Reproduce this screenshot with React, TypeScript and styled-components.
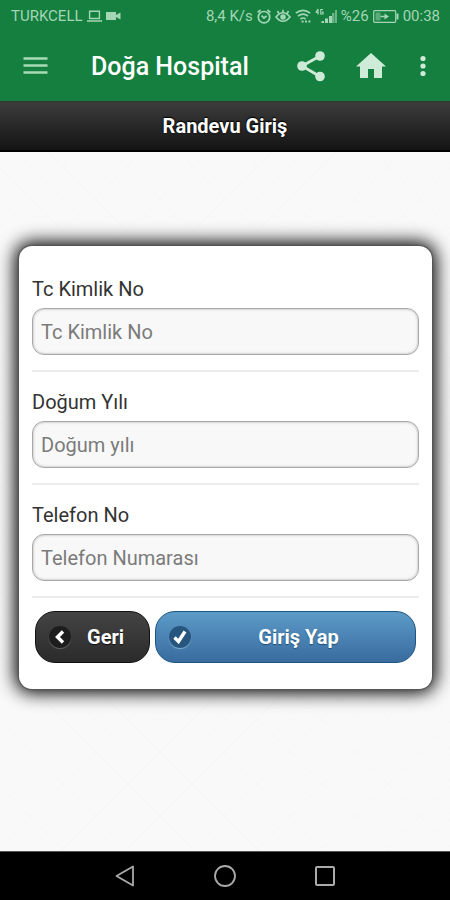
import React from "react";
import styled, { createGlobalStyle, css } from "styled-components";

const GlobalStyle = createGlobalStyle`
  *, *::before, *::after { box-sizing: border-box; }
  body { margin: 0; font-family: Roboto, "Noto Sans", sans-serif; }
  button, input { font-family: inherit; }
  svg { display: block; flex: none; }
`;

const Screen = styled.div`
  min-height: 100vh;
  display: flex;
  flex-direction: column;
  background: #f8f8f8;
`;

const StatusBar = styled.div`
  display: flex;
  justify-content: space-between;
  align-items: center;
  height: 32px;
  padding: 0 10px 0 11px;
  background: #157f40;
  color: #a3d6b4;
  font-size: 15px;
`;

const StatusGroup = styled.div`
  display: flex;
  align-items: center;
  gap: 4px;
  white-space: nowrap;
`;

const AppBar = styled.header`
  display: flex;
  align-items: center;
  height: 69px;
  padding: 0 20px 0 19px;
  background: #157f40;
  color: #fff;
`;

const AppTitle = styled.h1`
  flex: 1;
  margin: 0 0 0 39px;
  font-size: 25px;
  line-height: 32px;
  font-weight: 500;
  white-space: nowrap;
`;

const Actions = styled.div`
  display: flex;
  align-items: center;
  gap: 30px;
`;

const IconButton = styled.button<{ $color?: string }>`
  display: flex;
  padding: 0;
  border: 0;
  background: none;
  color: ${(p) => p.$color ?? "#cdebd6"};
  cursor: pointer;
`;

const PageHeader = styled.div`
  display: flex;
  align-items: center;
  justify-content: center;
  height: 51px;
  border-top: 1px solid #2c3a30;
  border-bottom: 2px solid #000;
  background: linear-gradient(#3c3c3c, #141414);
`;

const PageTitle = styled.h2`
  margin: 0;
  font-size: 20px;
  line-height: 24px;
  font-weight: 700;
  color: #fff;
  text-shadow: 0 0 2px #000, 0 -1px 1px #000;
`;

const Content = styled.main`
  flex: 1;
  padding: 94px 18px 24px 19px;
  background:
    repeating-linear-gradient(45deg, transparent 0 22px, #f7f7f7 22px 23px),
    repeating-linear-gradient(-45deg, transparent 0 22px, #f7f7f7 22px 23px),
    #f9f9f9;
`;

const Card = styled.form`
  padding: 31px 13px 26px;
  border-radius: 13px;
  background: #fff;
  box-shadow: 0 0 1px 1px #555, 0 0 18px 4px #000;
`;

const Field = styled.div`
  display: flex;
  flex-direction: column;
  gap: 7px;
  padding-bottom: 15px;
  border-bottom: 2px solid #ededed;

  & + & { padding-top: 18px; }
`;

const Label = styled.label`
  font-size: 20px;
  line-height: 24px;
  color: #333;
`;

const TextInput = styled.input`
  width: 100%;
  height: 47px;
  padding: 0 8px;
  border: 1px solid #a8a8a8;
  border-radius: 12px;
  background: #f8f8f8;
  box-shadow: inset 0 0 2px 1px #d4d4d4;
  font-size: 20px;
  color: #333;
  outline: none;

  &::placeholder { color: #7b7b7b; opacity: 1; }
`;

const ButtonRow = styled.div`
  display: flex;
  gap: 5px;
  padding: 13px 3px 0;
`;

const dark = css`
  border-color: #111;
  background: linear-gradient(#444, #2b2b2b);
  text-shadow: 0 1px 1px #111;
`;

const primary = css`
  flex: 1;
  border-color: #1b5680;
  background: linear-gradient(#5c9bc8, #396b9f);
  text-shadow: 0 1px 1px #1d4f75;
`;

const ActionButton = styled.button<{ $primary?: boolean }>`
  display: flex;
  align-items: center;
  gap: 16px;
  height: 52px;
  padding: 0 25px 0 13px;
  border: 1px solid;
  border-radius: 20px;
  color: #fff;
  font-size: 20px;
  font-weight: 700;
  cursor: pointer;
  ${(p) => (p.$primary ? primary : dark)}
`;

const ButtonText = styled.span`
  flex: 1;
  text-align: center;
`;

const IconDisc = styled.span<{ $primary?: boolean }>`
  display: flex;
  align-items: center;
  justify-content: center;
  width: 22px;
  height: 22px;
  border-radius: 50%;
  background: ${(p) => (p.$primary ? "#26557d" : "#1d1d1d")};
  box-shadow: 0 1px 1px ${(p) => (p.$primary ? "#7fb0d4" : "#666")};
`;

const NavBar = styled.nav`
  display: flex;
  align-items: center;
  justify-content: center;
  gap: 76px;
  height: 49px;
  border-top: 1px solid #555;
  background: #000;
`;

const Laptop = () => (
  <svg width="15" height="12" viewBox="0 0 15 12" fill="none" stroke="currentColor" strokeWidth="1.4">
    <path d="M2.6 1.2h9.8v7.3H2.6zM0 11h15" />
  </svg>
);

const Camera = () => (
  <svg width="15" height="8" viewBox="0 0 15 8" fill="currentColor">
    <path d="M0 0h10v3l4.5-2.6v7.2L10 5v3H0z" />
  </svg>
);

const Alarm = () => (
  <svg width="14" height="15" viewBox="0 0 14 15" fill="none" stroke="currentColor" strokeWidth="1.7">
    <circle cx="7" cy="8.2" r="5.700" />
    <path d="M.6 3.4 3.6 1M13.4 3.4l-3-2.4M4.6 6.6 7 9l2.6-2.200" />
  </svg>
);

const Eye = () => (
  <svg width="16" height="14" viewBox="0 0 16 14" fill="none" stroke="currentColor" strokeWidth="1.7">
    <path d="M1 8q7-8.500 14 0q-7 8.500-14 0z" />
    <path d="M8 3.8V.8M4.2 4.8 2.4 2M11.8 4.8 13.6 2" />
    <circle cx="8" cy="8" r="1.900" fill="currentColor" />
  </svg>
);

const Wifi = () => (
  <svg width="16" height="14" viewBox="0 0 16 14" fill="none" stroke="currentColor" strokeWidth="1.700">
    <path d="M.8 4.2q7.2-5.8 14.4 0M3 7.2q5-4 10 0M5.4 10q2.6-2 5.2 0" />
    <path d="M6.6 12.6h2M10 12.6h2M13.400 12.6h2" strokeWidth="2" />
  </svg>
);

const Signal = () => (
  <svg width="22" height="16" viewBox="0 0 22 16" fill="currentColor">
    <path d="M3 1v5.500M.8 4.500h3M3 1 .8 4.500M8 1.500H5.800v4.500H8V4H7" fill="none" stroke="currentColor" strokeWidth="1.200" />
    <path d="M6.500 13h2.500v2H6.500zM10 10.500h3v4.500h-3zM14 8h3v7h-3z" />
    <path d="M17 5h2.500v10h-2.500zM20 2h2v13h-2z" opacity=".6" />
  </svg>
);

const Battery = () => (
  <svg width="26" height="13" viewBox="0 0 26 13">
    <rect x=".7" y=".7" width="22" height="11.600" rx="1" fill="none" stroke="currentColor" strokeWidth="1.2" />
    <path d="M2.500 2.500h5v8h-5z" fill="currentColor" opacity=".5" />
    <path d="M7.500 5.800h4V3.500l4.500 3-4.500 3V7.200h-4z" fill="currentColor" />
    <path d="M24.500 3.500v6" stroke="currentColor" strokeWidth="2" />
  </svg>
);

const MenuIcon = () => (
  <svg width="33" height="24" viewBox="0 0 33 24" stroke="currentColor" strokeWidth="2.600">
    <path d="M4.500 3.500h24M4.500 10.500h24M4.500 17.500h24" />
  </svg>
);

const ShareIcon = () => (
  <svg width="30" height="32" viewBox="0 0 30 32" fill="currentColor">
    <path d="M24 5 6 15l18 10.500" fill="none" stroke="currentColor" strokeWidth="2.800" />
    <circle cx="24" cy="5" r="4.800" />
    <circle cx="6" cy="15" r="4.800" />
    <circle cx="24" cy="25.500" r="4.800" />
  </svg>
);

const HomeIcon = () => (
  <svg width="30" height="28" viewBox="0 0 30 28" fill="currentColor">
    <path d="M15 0 30 13.500h-4V25h-8v-9h-6v9H4V13.500H0z" />
  </svg>
);

const MoreIcon = () => (
  <svg width="14" height="24" viewBox="0 0 14 24" fill="currentColor">
    <circle cx="7" cy="3.500" r="2.600" />
    <circle cx="7" cy="11" r="2.600" />
    <circle cx="7" cy="18.500" r="2.600" />
  </svg>
);

const fields = [
  { id: "tc", label: "Tc Kimlik No", placeholder: "Tc Kimlik No" },
  { id: "year", label: "Doğum Yılı", placeholder: "Doğum yılı" },
  { id: "phone", label: "Telefon No", placeholder: "Telefon Numarası" },
];

export default function App() {
  return (
    <Screen>
      <GlobalStyle />
      <StatusBar>
        <StatusGroup>
          <span>TURKCELL</span>
          <Laptop />
          <Camera />
        </StatusGroup>
        <StatusGroup>
          <span>8,4 K/s</span>
          <Alarm />
          <Eye />
          <Wifi />
          <Signal />
          <span>%26</span>
          <Battery />
          <span>00:38</span>
        </StatusGroup>
      </StatusBar>
      <AppBar>
        <IconButton type="button" aria-label="Menü" $color="#a6dcb5"><MenuIcon /></IconButton>
        <AppTitle>Doğa Hospital</AppTitle>
        <Actions>
          <IconButton type="button" aria-label="Paylaş"><ShareIcon /></IconButton>
          <IconButton type="button" aria-label="Ana sayfa"><HomeIcon /></IconButton>
          <IconButton type="button" aria-label="Diğer"><MoreIcon /></IconButton>
        </Actions>
      </AppBar>
      <PageHeader>
        <PageTitle>Randevu Giriş</PageTitle>
      </PageHeader>
      <Content>
        <Card onSubmit={(e) => e.preventDefault()}>
          {fields.map((f) => (
            <Field key={f.id}>
              <Label htmlFor={f.id}>{f.label}</Label>
              <TextInput id={f.id} placeholder={f.placeholder} />
            </Field>
          ))}
          <ButtonRow>
            <ActionButton type="button">
              <IconDisc>
                <svg width="12" height="14" viewBox="0 0 12 14" fill="none" stroke="#fff" strokeWidth="3.400">
                  <path d="M9 1.500 3.500 7 9 12.500" />
                </svg>
              </IconDisc>
              <ButtonText>Geri</ButtonText>
            </ActionButton>
            <ActionButton type="submit" $primary>
              <IconDisc $primary>
                <svg width="14" height="14" viewBox="0 0 14 14" fill="none" stroke="#fff" strokeWidth="3.400">
                  <path d="M1.500 7.500 5.500 11.500 12 1.500" />
                </svg>
              </IconDisc>
              <ButtonText>Giriş Yap</ButtonText>
            </ActionButton>
          </ButtonRow>
        </Card>
      </Content>
      <NavBar>
        <IconButton type="button" aria-label="Geri" $color="#aaa">
          <svg width="24" height="24" viewBox="0 0 24 24" fill="none" stroke="currentColor" strokeWidth="1.800" strokeLinejoin="round">
            <path d="M20 2.500v19L3.500 12z" />
          </svg>
        </IconButton>
        <IconButton type="button" aria-label="Ana ekran" $color="#aaa">
          <svg width="24" height="24" viewBox="0 0 24 24" fill="none" stroke="currentColor" strokeWidth="1.800">
            <circle cx="12" cy="12" r="10" />
          </svg>
        </IconButton>
        <IconButton type="button" aria-label="Son uygulamalar" $color="#aaa">
          <svg width="24" height="24" viewBox="0 0 24 24" fill="none" stroke="currentColor" strokeWidth="2">
            <rect x="3" y="3" width="18" height="18" rx="1" />
          </svg>
        </IconButton>
      </NavBar>
    </Screen>
  );
}
